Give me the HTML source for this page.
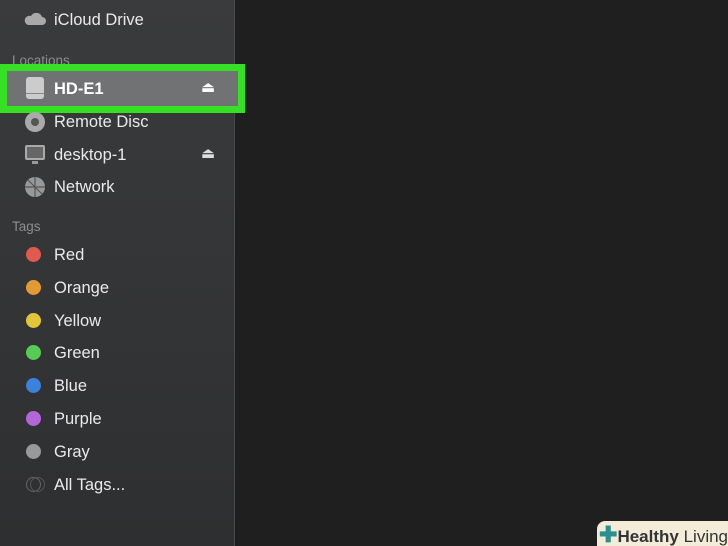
<!DOCTYPE html>
<html><head><meta charset="utf-8"><style>
html,body{margin:0;width:728px;height:546px;overflow:hidden;background:#1f1f1f}
body{font-family:"Liberation Sans",sans-serif;position:relative}
#sb{position:absolute;left:0;top:0;width:234px;height:546px;background:linear-gradient(#3a3b3d,#2e2f30);border-right:1px solid #4a4a4a}
.it{position:absolute;left:54px;color:#eaeaea;font-size:16.5px;line-height:20px}
.hd{position:absolute;left:12px;color:#8d8d8d;font-size:13.5px}
.dot{position:absolute;left:26px;width:15px;height:15px;border-radius:50%}
.ic{position:absolute;left:24px}
.ej{position:absolute;left:201px;color:#ddd;font-size:15px}
#sel{position:absolute;left:0;top:64px;width:231px;height:35px;border:7px solid #36e024;background:#717274}
#hl{position:absolute;left:597px;top:521px;width:131px;height:25px;background:#f2ecd8;border-radius:8px 0 0 0;font-size:17px;line-height:27px;color:#333}
</style></head><body>
<div id="sb">
<svg class="ic" style="top:10px" width="22" height="16"><path d="M4 15 H18 A4 4 0 0 0 18 7 A6 6 0 0 0 7 6 A4.5 4.5 0 0 0 4 15Z" fill="#a9a9a9"/></svg>
<div class="it" style="top:10px">iCloud Drive</div>
<div class="hd" style="top:53px">Locations</div>
<div id="sel"></div>
<svg class="ic" style="top:76px" width="22" height="24"><rect x="2" y="1" width="18" height="22" rx="3" fill="#ccc"/><rect x="2" y="17" width="18" height="1" fill="#888"/></svg>
<div class="it" style="top:79px;font-weight:bold;color:#fff">HD-E1</div>
<div class="ej" style="top:78px;color:#fff">⏏</div>
<svg class="ic" style="top:111px" width="22" height="22"><circle cx="11" cy="11" r="10" fill="#aaa"/><circle cx="11" cy="11" r="4" fill="#555"/></svg>
<div class="it" style="top:112px">Remote Disc</div>
<svg class="ic" style="top:144px" width="22" height="22"><rect x="1" y="1" width="20" height="15" rx="2" fill="#aaa"/><rect x="3" y="3" width="16" height="11" fill="#666"/><rect x="8" y="17" width="6" height="3" fill="#999"/></svg>
<div class="it" style="top:145px">desktop-1</div>
<div class="ej" style="top:144px">⏏</div>
<svg class="ic" style="top:176px" width="22" height="22"><circle cx="11" cy="11" r="10" fill="#999"/><path d="M11 1V21M1 11H21M4 4L18 18" stroke="#555" stroke-width="1.2" fill="none"/></svg>
<div class="it" style="top:177px">Network</div>
<div class="hd" style="top:219px">Tags</div>
<div class="dot" style="top:247px;background:#e05a4f"></div><div class="it" style="top:245px">Red</div>
<div class="dot" style="top:280px;background:#e39a35"></div><div class="it" style="top:278px">Orange</div>
<div class="dot" style="top:313px;background:#e2c637"></div><div class="it" style="top:311px">Yellow</div>
<div class="dot" style="top:345px;background:#56cc54"></div><div class="it" style="top:343px">Green</div>
<div class="dot" style="top:378px;background:#3a82dc"></div><div class="it" style="top:376px">Blue</div>
<div class="dot" style="top:411px;background:#b366d9"></div><div class="it" style="top:409px">Purple</div>
<div class="dot" style="top:444px;background:#999"></div><div class="it" style="top:442px">Gray</div>
<div class="dot" style="top:477px;border:1px solid #666;width:13px;height:13px"></div><div class="dot" style="top:477px;left:30px;border:1px solid #555;width:13px;height:13px"></div><div class="it" style="top:475px">All Tags...</div>
</div>
<div id="hl"><span style="color:#2a8f8f;font-weight:bold;font-size:22px;margin-left:2px">✚</span><b>Healthy</b> Living</div>
</body></html>
